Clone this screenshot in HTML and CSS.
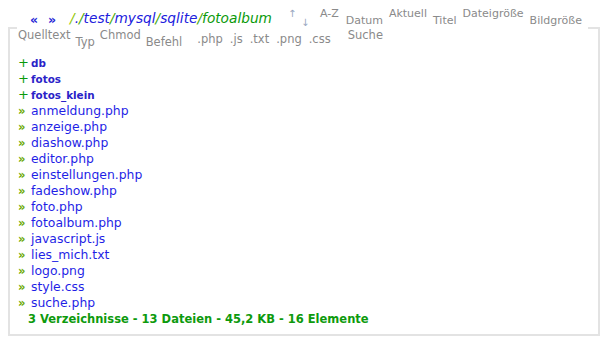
FILE: index.html
```html
<!DOCTYPE html>
<html lang="de">
<head>
<meta charset="utf-8">
<title>fotoalbum</title>
<link rel="stylesheet" href="styles.css">
</head>
<body>
<fieldset class="browser">
  <legend class="toolbar">
    <div class="row row-nav">
      <span class="nav">«</span>
      <span class="nav nav-next">»</span>
      <span class="path"><span class="sep first">/</span><span class="dir">.</span><span class="sep">/</span><span class="dir">test</span><span class="sep">/</span><span class="dir">mysql</span><span class="sep">/</span><span class="dir">sqlite</span><span class="sep">/</span><span class="cur">fotoalbum</span></span>
      <span class="arrow hi">↑</span>
      <span class="arrow lo">↓</span>
      <span class="tool hi az">A-Z</span>
      <span class="tool lo">Datum</span>
      <span class="tool hi">Aktuell</span>
      <span class="tool lo">Titel</span>
      <span class="tool hi">Dateigröße</span>
      <span class="tool lo">Bildgröße</span>
    </div>
    <div class="row row-tools">
      <span class="tool hi">Quelltext</span>
      <span class="tool lo">Typ</span>
      <span class="tool hi">Chmod</span>
      <span class="tool lo">Befehl</span>
      <span class="tool mid ext-first">.php</span>
      <span class="tool mid">.js</span>
      <span class="tool mid">.txt</span>
      <span class="tool mid">.png</span>
      <span class="tool mid">.css</span>
      <span class="tool hi search">Suche</span>
    </div>
  </legend>
  <ul class="list">
    <li class="item folder"><span class="mark plus">+</span><span class="name">db</span></li>
    <li class="item folder"><span class="mark plus">+</span><span class="name">fotos</span></li>
    <li class="item folder"><span class="mark plus">+</span><span class="name">fotos_klein</span></li>
    <li class="item file"><span class="mark raquo">»</span><span class="name">anmeldung.php</span></li>
    <li class="item file"><span class="mark raquo">»</span><span class="name">anzeige.php</span></li>
    <li class="item file"><span class="mark raquo">»</span><span class="name">diashow.php</span></li>
    <li class="item file"><span class="mark raquo">»</span><span class="name">editor.php</span></li>
    <li class="item file"><span class="mark raquo">»</span><span class="name">einstellungen.php</span></li>
    <li class="item file"><span class="mark raquo">»</span><span class="name">fadeshow.php</span></li>
    <li class="item file"><span class="mark raquo">»</span><span class="name">foto.php</span></li>
    <li class="item file"><span class="mark raquo">»</span><span class="name">fotoalbum.php</span></li>
    <li class="item file"><span class="mark raquo">»</span><span class="name">javascript.js</span></li>
    <li class="item file"><span class="mark raquo">»</span><span class="name">lies_mich.txt</span></li>
    <li class="item file"><span class="mark raquo">»</span><span class="name">logo.png</span></li>
    <li class="item file"><span class="mark raquo">»</span><span class="name">style.css</span></li>
    <li class="item file"><span class="mark raquo">»</span><span class="name">suche.php</span></li>
    <li class="summary">3 Verzeichnisse - 13 Dateien - 45,2 KB - 16 Elemente</li>
  </ul>
</fieldset>
</body>
</html>
```
FILE: styles.css
```css
html, body {
  background: #ffffff;
}
body {
  margin: 8px 7px 8px 8px;
  font-family: "DejaVu Sans", Verdana, sans-serif;
}
.browser {
  margin: 0;
  padding: 7px 8px 7px 7px;
  border: 2px solid #e3e3e3;
  min-width: 0;
}
.toolbar {
  padding: 0;
  margin: 0;
}
.row {
  display: flex;
  align-items: flex-start;
  height: 20px;
}
.row-nav {
  padding-left: 13px;
}
.row-tools {
  padding-left: 1px;
}
.tool {
  font-size: 11.5px;
  line-height: 13px;
  color: #8a8a8a;
  margin-right: 5px;
  white-space: nowrap;
}
.row-nav .tool {
  font-size: 11px;
  margin-right: 6px;
}
.row-nav .az { margin-right: 7px; }
.hi { margin-top: 0; }
.lo { margin-top: 7px; }
.mid { margin-top: 4px; }
.row-tools .mid { margin-right: 7px; }
.row-tools .hi { margin-top: 1px; }
.row-tools .lo { margin-top: 8px; }
.row-tools .mid { margin-top: 5px; }
.row-nav .hi { margin-top: -1px; }
.row-nav .lo { margin-top: 6px; }
.ext-first { margin-left: 10px; }
.search { margin-left: 10px; }
.row-tools .search { margin-top: 1px; }
.nav {
  font-size: 12.5px;
  font-weight: bold;
  line-height: 14px;
  margin-top: 5px;
  color: #2323d6;
  width: 18px;
}
.nav-next { width: 22px; }
.path {
  font-size: 13.7px;
  line-height: 16px;
  font-style: italic;
  margin-top: 2px;
  margin-right: 16px;
  white-space: nowrap;
}
.path .sep { color: #44a800; }
.path .sep.first { color: #8fc400; }
.path .dir { color: #2020dd; }
.path .cur { color: #0a9a0a; }
.arrow {
  font-size: 10px;
  line-height: 12px;
  color: #97a6c0;
  width: 12px;
}
.arrow.hi { margin-top: 0; width: 13px; }
.arrow.lo { margin-top: 9px; width: 19px; }
.list {
  list-style: none;
  margin: 0;
  padding: 0;
}
.item {
  display: flex;
  align-items: center;
  height: 16px;
  line-height: 16px;
}
.mark {
  width: 14px;
  padding-left: 1px;
  box-sizing: border-box;
  font-size: 12px;
}
.plus {
  color: #0a9a0a;
  font-size: 13px;
}
.raquo {
  color: #6aa800;
  font-weight: bold;
  font-size: 11.5px;
}
.file .name {
  font-size: 12.4px;
  color: #1f1fe6;
}
.folder .name {
  font-size: 10.4px;
  font-weight: bold;
  color: #2a23c8;
}
.summary {
  height: 16px;
  line-height: 16px;
  padding-left: 11px;
  font-size: 11.5px;
  font-weight: bold;
  color: #0d9a0d;
  white-space: nowrap;
}
```
